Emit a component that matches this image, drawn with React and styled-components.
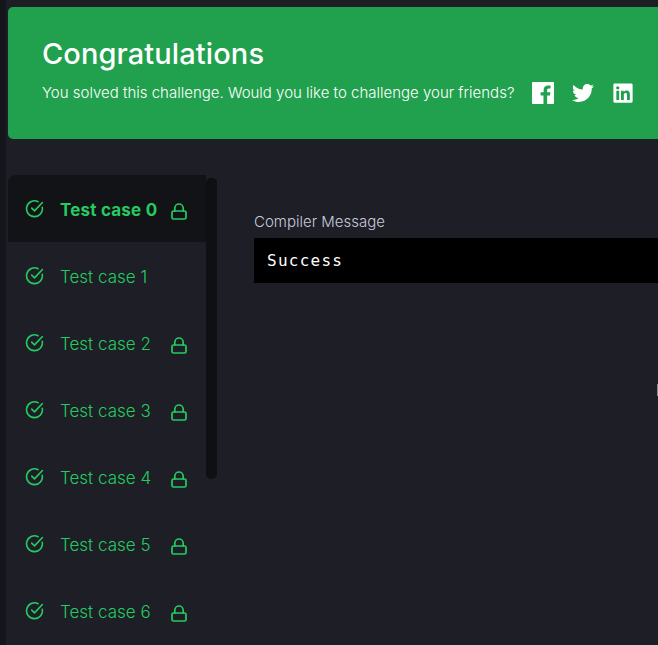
import React from "react";
import styled, { createGlobalStyle } from "styled-components";
import { FaTwitter, FaLinkedin } from "react-icons/fa";

const Global = createGlobalStyle`
  html, body { margin: 0; padding: 0; background: #1d1e26; }
  body { font-family: Inter, "Noto Sans", sans-serif; overflow: hidden; }
`;

const Page = styled.div`
  position: relative;
  display: flex;
  width: 658px;
  height: 645px;
  overflow: hidden;
  background: #1d1e26;
`;
const Strip = styled.div`
  flex: 0 0 6px;
  background: #15161b;
`;
const Main = styled.div`
  flex: 0 0 652px;
  padding: 7px 0 0 2px;
  box-sizing: border-box;
`;
const Banner = styled.section`
  display: flex;
  flex-direction: column;
  box-sizing: border-box;
  width: 670px;
  height: 132px;
  padding: 29px 0 0 34px;
  background: #21a14e;
  border-radius: 5px;
  color: #fff;
`;
const Title = styled.h1`
  margin: 0;
  font-size: 29px;
  line-height: 36px;
  font-weight: 500;
  letter-spacing: 0.1px;
`;
const ShareRow = styled.div`
  display: flex;
  align-items: center;
  margin-top: 10px;
`;
const ShareText = styled.p`
  margin: 0;
  width: 490px;
  font-size: 15px;
  font-weight: 300;
  line-height: 22px;
  white-space: nowrap;
`;
const Socials = styled.div`
  display: flex;
  gap: 18px;
  margin-top: -1px;
  font-size: 22px;
  color: #fff;
  svg { display: block; }
`;
const FacebookIcon = styled.svg`
  width: 22px;
  height: 22px;
  fill: currentColor;
`;
const Body = styled.div`
  display: flex;
  margin-top: 36px;
`;
const ListWrap = styled.div`
  display: flex;
  flex: 0 0 209px;
`;
const List = styled.ul`
  flex: 0 0 198px;
  margin: 0;
  padding: 0;
  list-style: none;
`;
const Row = styled.li`
  display: flex;
  align-items: center;
  box-sizing: border-box;
  height: 67px;
  padding-left: 17px;
  color: #24cc60;
  background: ${(p) => (p.$active ? "#121317" : "transparent")};
  border-radius: ${(p) => (p.$active ? "8px 0 0 0" : "0")};
`;
const CheckIcon = styled.svg`
  flex: 0 0 19px;
  width: 19px;
  height: 19px;
  fill: none;
  stroke: #24cc60;
  stroke-width: 2;
  stroke-linecap: round;
  stroke-linejoin: round;
`;
const Label = styled.span`
  width: 111px;
  margin: 2px 0 0 16px;
  font-size: 17px;
  line-height: 22px;
  font-weight: ${(p) => (p.$active ? 700 : 300)};
  letter-spacing: ${(p) => (p.$active ? "0.2px" : "0")};
  white-space: nowrap;
`;
const LockIcon = styled.svg`
  flex: 0 0 16px;
  width: 16px;
  height: 17px;
  margin-top: 5px;
  fill: none;
  stroke: #24cc60;
  stroke-width: 1.7;
  stroke-linecap: round;
  stroke-linejoin: round;
`;
const Scroll = styled.div`
  flex: 0 0 11px;
  height: 301px;
  margin-top: 3px;
  background: #0f1014;
  border-radius: 5px;
`;
const Output = styled.div`
  flex: 1;
  padding: 37px 0 0 37px;
  min-width: 0;
`;
const OutputLabel = styled.div`
  font-size: 15px;
  font-weight: 300;
  line-height: 20px;
  color: #c9cad6;
`;
const Console = styled.pre`
  margin: 6px 0 0;
  height: 45px;
  box-sizing: border-box;
  padding: 0 13px;
  background: #000;
  color: #fff;
  font-family: "DejaVu Sans Mono", monospace;
  font-size: 16px;
  line-height: 46px;
  letter-spacing: 1.25px;
`;
const Tick = styled.div`
  position: absolute;
  right: 0;
  top: 384px;
  width: 1px;
  height: 12px;
  background: #8a8b93;
`;

const Check = () => (
  <CheckIcon viewBox="0 0 24 24">
    <path d="M21.8 10.5A10 10 0 1 1 16.5 3.4" />
    <path d="M8.5 11.5 12 15 22 4.5" />
  </CheckIcon>
);
const Lock = () => (
  <LockIcon viewBox="0 0 16 17">
    <rect x="1" y="8" width="14" height="8" rx="1.5" />
    <path d="M3.8 8V5.2a4.2 4.2 0 0 1 8.4 0V8" />
  </LockIcon>
);
const Facebook = () => (
  <FacebookIcon viewBox="0 0 24 24">
    <path d="M1 0h22a1 1 0 0 1 1 1v22a1 1 0 0 1-1 1h-6.5v-9.3h3.1l.5-3.6h-3.6V8.8c0-1 .3-1.8 1.8-1.8h1.9V3.8c-.3 0-1.5-.1-2.8-.1-2.8 0-4.7 1.7-4.7 4.8v2.6H9.4v3.6h3.1V24H1a1 1 0 0 1-1-1V1a1 1 0 0 1 1-1z" />
  </FacebookIcon>
);

const cases = [0, 1, 2, 3, 4, 5, 6];

export default function App() {
  return (
    <Page>
      <Global />
      <Strip />
      <Main>
        <Banner>
          <Title>Congratulations</Title>
          <ShareRow>
            <ShareText>You solved this challenge. Would you like to challenge your friends?</ShareText>
            <Socials>
              <Facebook />
              <FaTwitter />
              <FaLinkedin />
            </Socials>
          </ShareRow>
        </Banner>
        <Body>
          <ListWrap>
            <List>
              {cases.map((n) => (
                <Row key={n} $active={n === 0}>
                  <Check />
                  <Label $active={n === 0}>Test case {n}</Label>
                  {n !== 1 && <Lock />}
                </Row>
              ))}
            </List>
            <Scroll />
          </ListWrap>
          <Output>
            <OutputLabel>Compiler Message</OutputLabel>
            <Console>Success</Console>
          </Output>
        </Body>
      </Main>
      <Tick />
    </Page>
  );
}
